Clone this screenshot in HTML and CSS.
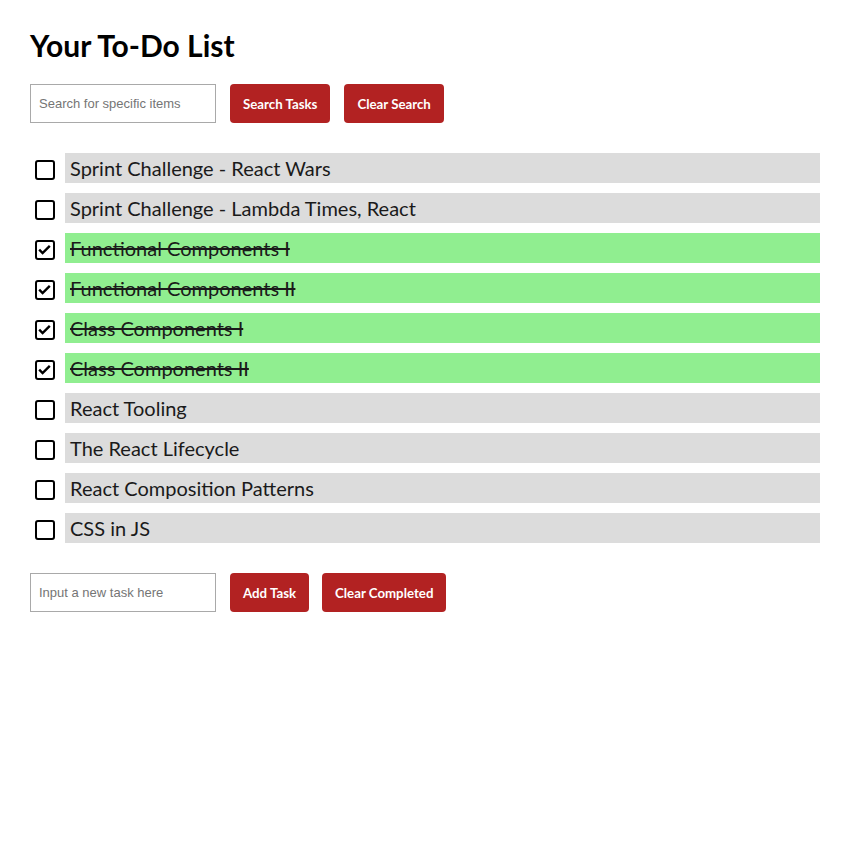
FILE: index.html
```html
<!DOCTYPE html>
<html>
<head>
<meta charset="utf-8">
<link rel="stylesheet" href="styles.css">
</head>
<body>
<div class="app">
  <h1 class="title">Your To-Do List</h1>
  <div class="controls">
    <input class="field" type="text" placeholder="Search for specific items">
    <button class="btn">Search Tasks</button>
    <button class="btn">Clear Search</button>
  </div>
  <ul class="list">
    <li class="item"><span class="box"></span><span class="label">Sprint Challenge - React Wars</span></li>
    <li class="item"><span class="box"></span><span class="label">Sprint Challenge - Lambda Times, React</span></li>
    <li class="item done"><span class="box"><svg viewBox="0 0 16 16"><path d="M2.2 7.6 L5.6 11 L12.8 3.8" fill="none" stroke="#000" stroke-width="2.4"/></svg></span><span class="label">Functional Components I</span></li>
    <li class="item done"><span class="box"><svg viewBox="0 0 16 16"><path d="M2.2 7.6 L5.6 11 L12.8 3.8" fill="none" stroke="#000" stroke-width="2.4"/></svg></span><span class="label">Functional Components II</span></li>
    <li class="item done"><span class="box"><svg viewBox="0 0 16 16"><path d="M2.2 7.6 L5.6 11 L12.8 3.8" fill="none" stroke="#000" stroke-width="2.4"/></svg></span><span class="label">Class Components I</span></li>
    <li class="item done"><span class="box"><svg viewBox="0 0 16 16"><path d="M2.2 7.6 L5.6 11 L12.8 3.8" fill="none" stroke="#000" stroke-width="2.4"/></svg></span><span class="label">Class Components II</span></li>
    <li class="item"><span class="box"></span><span class="label">React Tooling</span></li>
    <li class="item"><span class="box"></span><span class="label">The React Lifecycle</span></li>
    <li class="item"><span class="box"></span><span class="label">React Composition Patterns</span></li>
    <li class="item"><span class="box"></span><span class="label">CSS in JS</span></li>
  </ul>
  <div class="controls bottom">
    <input class="field" type="text" placeholder="Input a new task here">
    <button class="btn">Add Task</button>
    <button class="btn">Clear Completed</button>
  </div>
</div>
</body>
</html>
```
FILE: styles.css
```css
html, body {
  margin: 0;
  padding: 0;
  background: #fff;
}
body {
  font-family: Lato, "Liberation Sans", sans-serif;
  color: #000;
}
.app {
  padding: 24px 29px 0 30px;
}
.title {
  margin: 0;
  font-size: 30px;
  font-weight: 700;
  line-height: 42px;
}
.controls {
  display: flex;
  align-items: center;
  gap: 14px;
  margin-top: 18px;
}
.controls.bottom {
  gap: 13px;
  margin-top: 30px;
}
.controls.bottom .field {
  margin-right: 1px;
}
.field {
  box-sizing: border-box;
  width: 186px;
  height: 39px;
  border: 1px solid #a9a9a9;
  padding: 0 8px;
  font-family: "Liberation Sans", Arial, sans-serif;
  font-size: 13px;
  color: #000;
  outline: none;
}
.field::placeholder {
  color: #757575;
}
.btn {
  box-sizing: border-box;
  height: 39px;
  padding: 0 13px;
  border: none;
  border-radius: 4px;
  background: #b22222;
  color: #fff;
  font-family: Lato, sans-serif;
  font-weight: 700;
  font-size: 13.25px;
}
.list {
  list-style: none;
  margin: 30px 0 0;
  padding: 0;
  display: flex;
  flex-direction: column;
  gap: 10px;
}
.item {
  display: flex;
  align-items: flex-start;
  height: 30px;
}
.box {
  box-sizing: border-box;
  width: 20px;
  height: 20px;
  margin: 7px 10px 0 5px;
  border: 2px solid #000;
  border-radius: 3px;
  display: flex;
  flex: none;
}
.box svg {
  width: 16px;
  height: 16px;
  display: block;
}
.label {
  flex: 1;
  height: 30px;
  line-height: 31px;
  background: #dcdcdc;
  padding-left: 5px;
  font-size: 20px;
  color: #1a1a1a;
}
.done .label {
  background: #90ee90;
  text-decoration: line-through;
}
```
